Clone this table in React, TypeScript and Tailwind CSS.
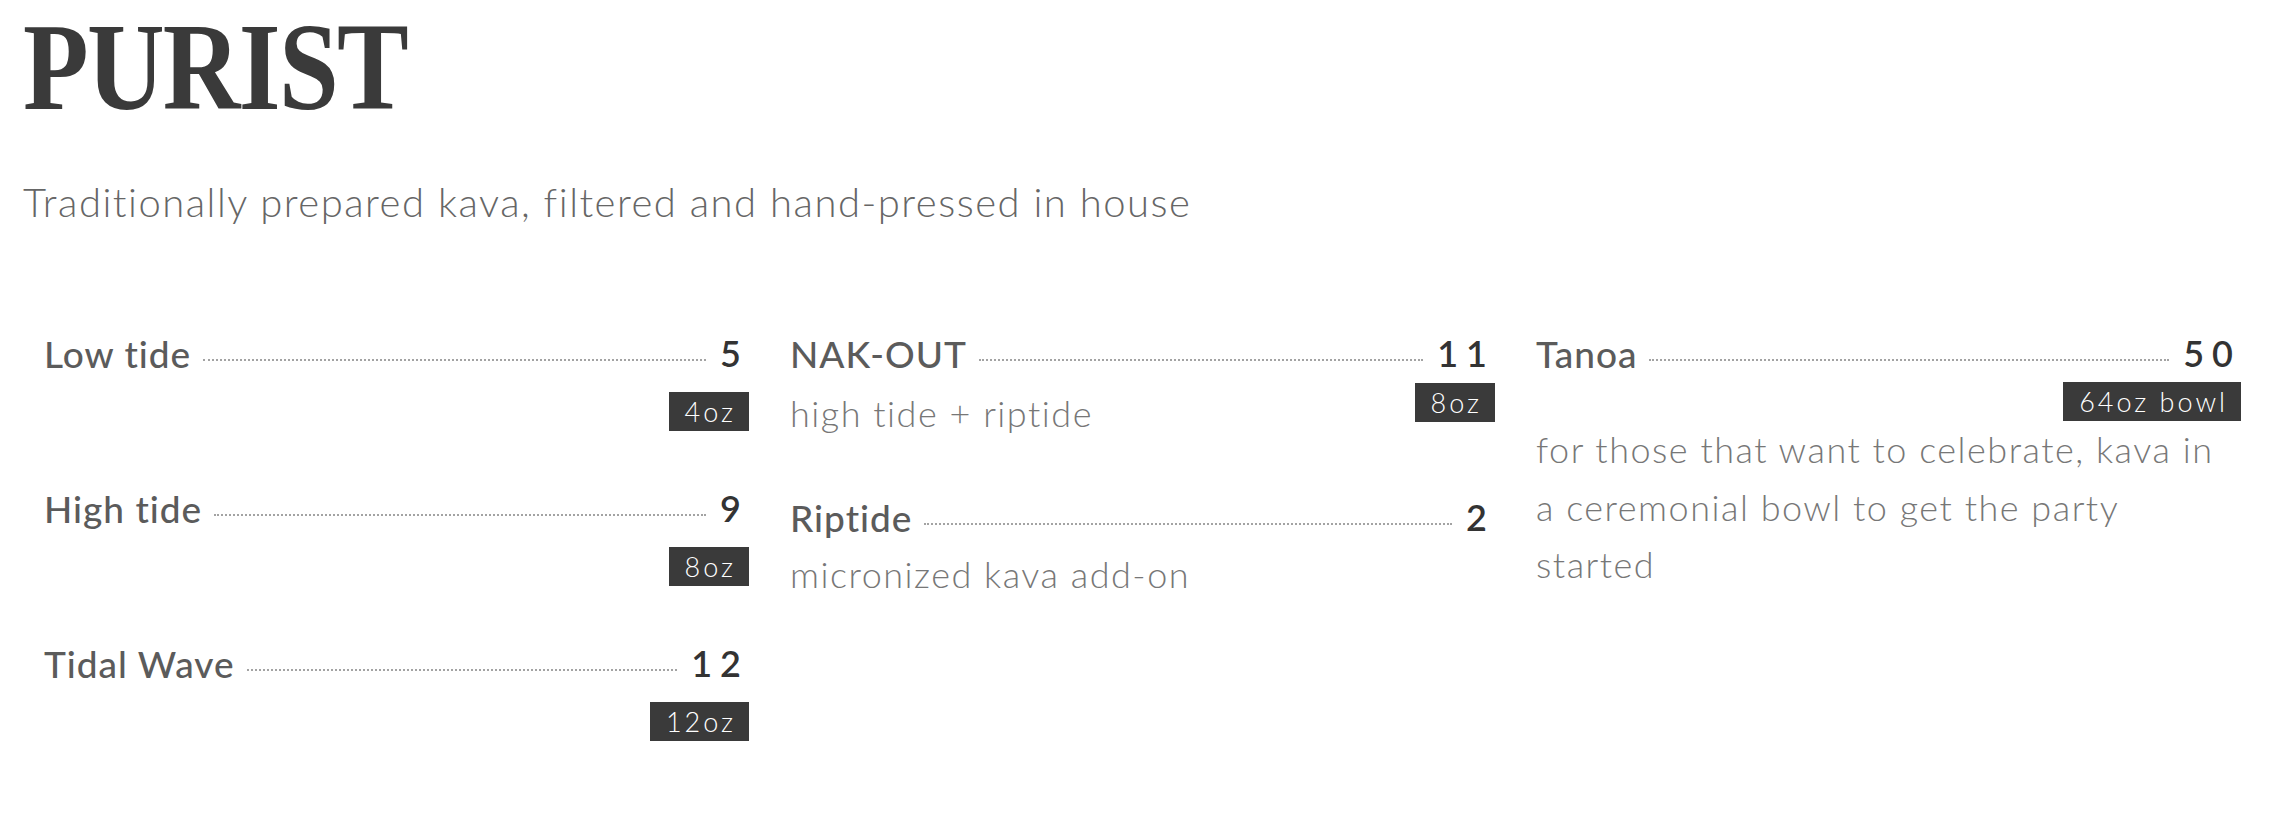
import React from 'react';

type Item = {
  name: string;
  price: string;
  size?: string;
  desc?: string;
};

const colOne: Item[] = [
  { name: 'Low tide', price: '5', size: '4oz' },
  { name: 'High tide', price: '9', size: '8oz' },
  { name: 'Tidal Wave', price: '12', size: '12oz' },
];

function NameRow({ name, price }: { name: string; price: string }) {
  return (
    <div className="flex items-end pt-[3px]">
      <span className="text-[37px] leading-[43px] font-medium tracking-[1px] text-[#5b5b5b] whitespace-nowrap">{name}</span>
      <span className="flex-1 ml-[12px] mr-[14px] mb-[14px] border-b-2 border-dotted border-[#a3a3a3]" />
      <span className="text-[36px] leading-[43px] font-semibold text-[#333] tracking-[8px] whitespace-nowrap">{price}</span>
    </div>
  );
}

function Size({ label }: { label: string }) {
  return (
    <span className="inline-block bg-[#3a3a3a] text-white text-[27px] leading-[39px] font-light tracking-[3px] pl-[16px] pr-[13px] whitespace-nowrap">
      {label}
    </span>
  );
}

export default function App() {
  return (
    <div className="w-full h-[820px] bg-white font-['Lato','Noto_Sans',sans-serif] text-[#3a3a3a]">
      {/* header */}
      <div className="pl-[23px]">
        <h1 className="inline-block mt-[5px] text-[125px] leading-none font-bold tracking-[-2px] font-['Liberation_Serif',serif] text-[#3a3a3a] origin-left scale-x-[0.86]">
          PURIST
        </h1>
        <p className="mt-[49px] text-[40px] leading-[46px] font-light tracking-[1.5px] text-[#666]">
          Traditionally prepared kava, filtered and hand-pressed in house
        </p>
      </div>

      {/* menu */}
      <div className="mt-[104px] pl-[44px] pr-[35px] grid grid-cols-3 gap-x-[41px] items-start">
        <div className="flex flex-col gap-[53px]">
          {colOne.map((item) => (
            <div key={item.name}>
              <NameRow name={item.name} price={item.price} />
              <div className="mt-[17px] flex justify-end">
                <Size label={item.size!} />
              </div>
            </div>
          ))}
        </div>

        <div className="flex flex-col gap-[50px]">
          <div>
            <NameRow name="NAK-OUT" price="11" />
            <div className="mt-[8px] flex justify-between items-start">
              <p className="mt-[2px] text-[36px] leading-[1.6] font-light tracking-[1.5px] text-[#777]">high tide + riptide</p>
              <Size label="8oz" />
            </div>
          </div>
          <div>
            <NameRow name="Riptide" price="2" />
            <p className="mt-[7px] text-[36px] leading-[1.6] font-light tracking-[1.5px] text-[#777]">micronized kava add-on</p>
          </div>
        </div>

        <div>
          <NameRow name="Tanoa" price="50" />
          <div className="mt-[7px] flex justify-end">
            <Size label="64oz bowl" />
          </div>
          <p className="text-[36px] leading-[1.6] font-light tracking-[1.5px] text-[#777] pr-[20px]">
            for those that want to celebrate, kava in a ceremonial bowl to get the party started
          </p>
        </div>
      </div>
    </div>
  );
}
